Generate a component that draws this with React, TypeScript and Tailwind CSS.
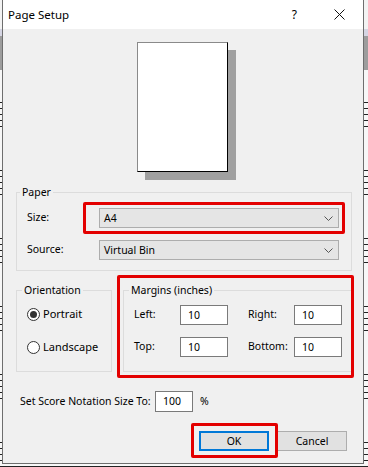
import React from "react";

const font = { fontFamily: '"Noto Sans", "Open Sans", sans-serif' };

function Staff() {
  return (
    <div className="flex flex-col gap-[5px]">
      <div className="h-px bg-[#222]" />
      <div className="h-px bg-[#222]" />
      <div className="h-px bg-[#222]" />
      <div className="h-px bg-[#222]" />
      <div className="h-px bg-[#222]" />
    </div>
  );
}

function Select({ value }: { value: string }) {
  return (
    <div className="shrink-0 w-[240px] h-[20px] border border-[#adadad] bg-[#e5e5e5] flex items-center pl-[4px] pr-[5px]">
      <span className="flex-1 leading-none">{value}</span>
      <svg width="9" height="5" viewBox="0 0 9 5" fill="none">
        <path d="M0.5 0.5 L4.5 4.5 L8.5 0.5" stroke="#555" strokeWidth="1" />
      </svg>
    </div>
  );
}

function Input({ value, w, h }: { value: string; w: string; h: string }) {
  return (
    <div className={`shrink-0 ${w} ${h} border border-[#7a7a7a] bg-white flex items-center pl-[7px] leading-none`}>
      {value}
    </div>
  );
}

export default function App() {
  return (
    <div
      className="relative w-[368px] h-[467px] bg-[#f7f7f7] overflow-hidden text-[10.5px] text-black"
      style={font}
    >
      {/* background score canvas */}
      <div className="absolute inset-0 flex flex-col">
        <div className="h-[30px] bg-[#f3f3f3]" />
        <div className="h-[7px] bg-[#d5d5e3]" />
        <div className="h-[35px] bg-[#9d9d9d]" />
        <div className="flex flex-col gap-[43px] pt-[32px]">
          <Staff />
          <Staff />
          <Staff />
          <Staff />
          <Staff />
          <Staff />
        </div>
      </div>

      {/* dialog window */}
      <div className="absolute left-[2px] top-0 w-[362px] h-[464px] flex flex-col border-x border-b border-[#6e6e6e] bg-[#f0f0f0]">
        <div className="shrink-0 h-[29px] bg-white flex items-center pl-[5px]">
          <span className="text-[11.5px]">Page Setup</span>
          <span className="ml-auto text-[12px] leading-none">?</span>
          <svg className="ml-[37px] mr-[18px]" width="11" height="11" viewBox="0 0 11 11" fill="none">
            <path d="M0.5 0.5 L10.5 10.5 M10.5 0.5 L0.5 10.5" stroke="#111" strokeWidth="1" />
          </svg>
        </div>

        <div className="relative flex-1 flex flex-col">
          {/* page preview */}
          <div className="shrink-0 ml-[134px] mt-[13px] w-[91px] h-[130px] bg-white border-t border-l border-[#8a8a8a] border-r border-b border-r-black border-b-black shadow-[8px_8px_0_#a0a0a0]" />

          {/* Paper group */}
          <div className="shrink-0 mt-[20px] ml-[13px] w-[336px] h-[79px] border border-[#dcdcdc] flex flex-col">
            <div className="-mt-[9px] ml-[3px] self-start px-[2px] bg-[#f0f0f0] h-[16px] leading-[16px]">Paper</div>
            <div className="mt-[8px] flex items-center h-[20px]">
              <span className="w-[82px] shrink-0 pl-[10px]">Size:</span>
              <Select value="A4" />
            </div>
            <div className="mt-[12px] flex items-center h-[20px]">
              <span className="w-[82px] shrink-0 pl-[10px]">Source:</span>
              <Select value="Virtual Bin" />
            </div>
          </div>

          {/* Orientation + Margins */}
          <div className="shrink-0 mt-[19px] ml-[13px] flex gap-[11px]">
            <div className="shrink-0 w-[96px] h-[82px] border border-[#dcdcdc] flex flex-col">
              <div className="-mt-[9px] ml-[5px] self-start px-[2px] bg-[#f0f0f0] h-[16px] leading-[16px]">Orientation</div>
              <div className="mt-[8px] h-[16px] pl-[10px] flex items-center gap-[3px]">
                <div className="shrink-0 w-[13px] h-[13px] rounded-full border border-[#333] bg-white flex items-center justify-center">
                  <div className="w-[7px] h-[7px] rounded-full bg-[#333]" />
                </div>
                <span className="text-[11px]">Portrait</span>
              </div>
              <div className="mt-[17px] h-[16px] pl-[10px] flex items-center gap-[3px]">
                <div className="shrink-0 w-[13px] h-[13px] rounded-full border border-[#333] bg-white" />
                <span className="text-[11px]">Landscape</span>
              </div>
            </div>

            <div className="shrink-0 w-[229px] h-[82px] border border-[#dcdcdc] flex flex-col">
              <div className="-mt-[9px] ml-[5px] self-start px-[2px] bg-[#f0f0f0] h-[16px] leading-[16px]">Margins (inches)</div>
              <div className="mt-[7px] flex items-center">
                <span className="w-[56px] shrink-0 pl-[10px]">Left:</span>
                <Input value="10" w="w-[48px]" h="h-[20px]" />
                <span className="ml-[20px] w-[46px] shrink-0">Right:</span>
                <Input value="10" w="w-[48px]" h="h-[20px]" />
              </div>
              <div className="mt-[12px] flex items-center">
                <span className="w-[56px] shrink-0 pl-[10px]">Top:</span>
                <Input value="10" w="w-[48px]" h="h-[20px]" />
                <span className="ml-[20px] w-[46px] shrink-0">Bottom:</span>
                <Input value="10" w="w-[48px]" h="h-[20px]" />
              </div>
            </div>
          </div>

          {/* score notation size */}
          <div className="shrink-0 mt-[19px] ml-[17px] flex items-center">
            <span className="w-[135px] shrink-0 whitespace-nowrap">Set Score Notation Size To:</span>
            <Input value="100" w="w-[38px]" h="h-[21px]" />
            <span className="ml-[7px]">%</span>
          </div>

          {/* buttons */}
          <div className="shrink-0 mt-[19px] ml-[196px] flex gap-[8px]">
            <div className="w-[70px] h-[20px] border-2 border-[#0078d7] bg-[#e1e1e1] flex items-center justify-center leading-none">OK</div>
            <div className="w-[70px] h-[20px] border border-[#adadad] bg-[#e1e1e1] flex items-center justify-center leading-none">Cancel</div>
          </div>

          {/* red annotation boxes */}
          <div className="absolute left-[80px] top-[173px] w-[262px] h-[32px] border-[3px] border-[#e30000] rounded-[2px]" />
          <div className="absolute left-[114px] top-[246px] w-[237px] h-[103px] border-[3px] border-[#e30000] rounded-[2px]" />
          <div className="absolute left-[188px] top-[394px] w-[87px] h-[35px] border-[3px] border-[#e30000] rounded-[2px]" />
        </div>
      </div>
    </div>
  );
}
